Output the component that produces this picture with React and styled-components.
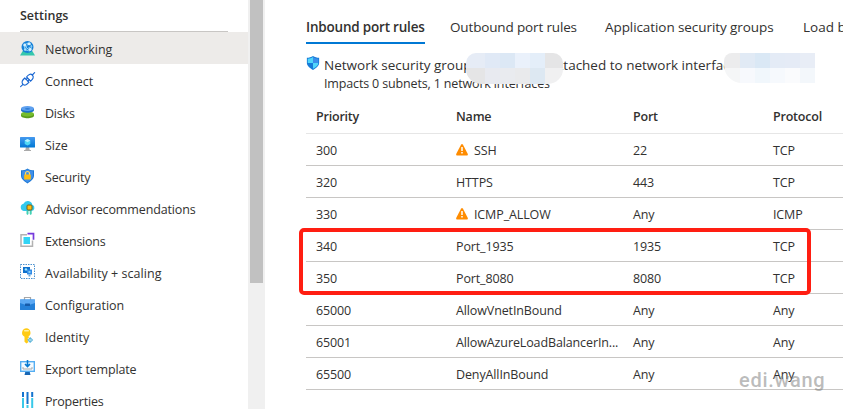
import React from 'react'
import styled, { createGlobalStyle, css } from 'styled-components'

const GlobalStyle = createGlobalStyle`
  * { box-sizing: border-box; }

  body {
    margin: 0;
    overflow: hidden;
    background: #fff;
    color: #323130;
    font-family: 'Open Sans', 'Noto Sans', sans-serif;
    font-size: 12.5px;
  }
`

const Page = styled.div`
  display: flex;
  width: 843px;
  height: 409px;
  overflow: hidden;
`

const Sidebar = styled.nav`
  flex: 0 0 248px;
  height: 100%;
  overflow: hidden;
`

const SidebarHeading = styled.div`
  height: 32px;
  margin: 0 20px;
  border-bottom: 1px solid #c8c6c4;
  font-weight: 600;
  line-height: 32px;
`

const NavItem = styled.div`
  display: flex;
  align-items: center;
  gap: 9px;
  height: 32px;
  padding: 0 20px;
  background: ${props => props.$active ? '#edebe9' : 'transparent'};

  svg {
    flex: none;
  }
`

const Label = styled.span`
  padding-top: 4px;
  line-height: 32px;
  white-space: nowrap;
  letter-spacing: ${props => props.$spacing || 0}px;
`

const ScrollTrack = styled.div`
  flex: 0 0 17px;
  height: 100%;
  padding: 0 2px;
  background: #f0f0f0;
`

const ScrollThumb = styled.div`
  height: 283px;
  background: #c1c1c1;
`

const Main = styled.main`
  position: relative;
  flex: 1;
  min-width: 0;
  padding: 12px 0 0 41px;
`

const Tabs = styled.div`
  display: flex;
  gap: 25px;
  height: 32px;
`

const Tab = styled.div`
  flex: none;
  width: ${props => props.$width}px;
  font-size: 13.5px;
  line-height: 31px;
  white-space: nowrap;
  letter-spacing: ${props => props.$spacing || 0}px;

  ${props => props.$active && css`
    border-bottom: 2px solid #0078d4;
    font-weight: 600;
  `}
`

const Info = styled.div`
  position: relative;
  display: flex;
  gap: 4px;
  height: 57px;
  padding-top: 11px;
  white-space: nowrap;

  > svg {
    margin-top: 1px;
  }
`

const InfoLine = styled.div`
  display: flex;
  height: 19px;
  font-size: 13.5px;
  line-height: 21px;
`

const GroupName = styled.span`
  flex: 0 0 227px;
`

const Impact = styled.div`
  line-height: 20px;
  letter-spacing: -0.15px;
`

const Mosaic = styled.div`
  position: absolute;
  top: 9px;
  left: ${props => props.$left}px;
  display: grid;
  grid-template-columns: ${props => props.$columns};
  grid-template-rows: 15px ${props => props.$lower}px;
  overflow: hidden;
  border-radius: ${props => props.$radius};
`

const MosaicCell = styled.i`
  background: ${props => props.$color};
`

const Cell = styled.div`
  display: flex;
  align-items: center;
  gap: 6px;
  white-space: nowrap;
`

const Row = styled.div`
  display: grid;
  grid-template-columns: 140px 177px 140px 1fr;
  height: 32px;
  padding: 1px 0 0 10px;
  border-bottom: 1px solid #c8c6c4;
  letter-spacing: -0.12px;

  ${props => props.$header && css`
    height: 33px;
    padding: 0 0 1px 10px;
    border-bottom-color: #e6e6e6;
    font-weight: 600;
    letter-spacing: -0.2px;
  `}
`

const Highlight = styled.div`
  position: absolute;
  top: 228px;
  left: 34px;
  width: 512px;
  height: 67px;
  border: 4px solid #ff1e12;
  border-radius: 5px;
`

const Watermark = styled.div`
  position: absolute;
  top: 368px;
  left: 474px;
  color: rgba(130, 130, 130, 0.55);
  font: 500 20px/24px Roboto, sans-serif;
  letter-spacing: 0.7px;
`

const Icon = ({ size = 16, children }) => (
  <svg width={size} height={size} viewBox='0 0 16 16' fill='none'>{children}</svg>
)

const NetworkIcon = () => (
  <Icon>
    <path d='M3 10.500h9l3 5H0z' fill='#35c7ad' />
    <circle cx='7.5' cy='7' r='6' fill='#1580d8' />
    <path d='M4 5l4-2 4 3-2 5-5-1z M4 5l6 6M8 3l-3 7M5 10l7-4' stroke='#9bd8fa' strokeWidth='.8' />
    <circle cx='4.7' cy='5' r='1.4' fill='#d8f3ff' />
    <circle cx='9.2' cy='3.7' r='1.5' fill='#d8f3ff' />
    <circle cx='10.2' cy='9.5' r='1.4' fill='#d8f3ff' />
    <circle cx='5' cy='9.7' r='1.1' fill='#a6e4ff' />
  </Icon>
)

const ConnectIcon = () => (
  <Icon>
    <g stroke='#1765d1' strokeWidth='1.1' strokeLinecap='round'>
      <path d='M.6 14.600L3 12.300M12.300 3L14.600.7' />
      <path d='M3 12.300c-2-2-.7-4 1.800-6.300l4.200 4.200c-2 2.500-4 3.900-6 2.100z' />
      <path d='M12.300 3c2 2 .7 4-1.600 6.200L6.500 5C8.500 2.500 10.500 1.200 12.300 3z' />
      <path d='M6.200 7.500l1.300-1.300M7.800 9.100l1.400-1.400' />
    </g>
  </Icon>
)

const DisksIcon = () => (
  <Icon>
    <path d='M1 10v1.500c0 3.600 13 3.600 13 0V10z' fill='#5a9c1c' />
    <ellipse cx='7.500' cy='10' rx='6.500' ry='2.600' fill='#76bc2d' />
    <path d='M1 4.500V6c0 3.600 13 3.600 13 0V4.500z' fill='#1b70c9' />
    <ellipse cx='7.500' cy='4.500' rx='6.500' ry='2.600' fill='#5ea0ef' />
    <ellipse cx='7.500' cy='4.800' rx='2.500' ry='.9' fill='#2d7cd5' />
  </Icon>
)

const SizeIcon = () => (
  <Icon>
    <defs>
      <linearGradient id='screen' x2='0' y2='1'>
        <stop stopColor='#4599ef' />
        <stop offset='1' stopColor='#0078d4' />
      </linearGradient>
    </defs>
    <path d='M6 11h3l.7 3H11v1H4v-1h1.300z' fill='#aaa' />
    <rect y='1' width='15' height='10.500' rx='.5' fill='url(#screen)' />
    <path d='M7.500 3l2.800 1.500v3.500l-2.800 1.600-2.800-1.600V4.500z' fill='#50d8f5' />
    <path d='M7.500 3l2.800 1.500-2.800 1.700-2.800-1.700z' fill='#b3f0ff' />
  </Icon>
)

const SecurityIcon = () => (
  <Icon>
    <path d='M7.500 .5C9.500 2 11.500 2.200 14 2.200v5.300c0 4-4 6.200-6.500 8-2.500-1.800-6.500-4-6.500-8V2.200c2.500 0 4.500-.2 6.500-1.700z' fill='#1c79d6' />
    <path d='M7.500 1.600C9.300 2.800 11 3.100 13 3.200v4.300c0 3.200-3 5.100-5.500 6.800C5 12.600 2 10.700 2 7.500V3.200c2-.1 3.700-.4 5.500-1.600z' fill='#418fe8' />
    <path d='M5.500 7V5.500a2 2 0 014 0V7' stroke='#ffdc65' strokeWidth='1.200' />
    <rect x='4.200' y='6.500' width='6.600' height='5' rx='.6' fill='#ffbe13' />
  </Icon>
)

const AdvisorIcon = () => (
  <Icon>
    <path d='M3.700 11a3.700 3.700 0 01-.2-7.200 4.600 4.600 0 018.800 1A3.200 3.200 0 0111.500 11z' fill='#32c9ed' />
    <path d='M6.500 10.500h2v3.500l-1 1-1-1zM9.700 10.500h2v3.500l-1 1-1-1z' fill='#43d2b5' />
    <rect x='7' y='5' width='5' height='5' rx='1' fill='#ffbd10' stroke='#71611d' />
  </Icon>
)

const ExtensionsIcon = () => (
  <Icon>
    <path d='M7 2.700H1v11.500h11.500V8.500' stroke='#b2b2b2' strokeWidth='1.500' />
    <path d='M7.500 1.700h6v6' stroke='#773adc' strokeWidth='1.700' />
    <rect x='3.500' y='5' width='6.500' height='7' fill='#32d4f5' />
  </Icon>
)

const ScalingIcon = () => (
  <Icon>
    <rect x='.5' y='.5' width='14' height='14' stroke='#4b91cf' strokeDasharray='1.500 1' />
    <path d='M3 3h7v6H3z' fill='#0f70cc' />
    <path d='M7 5.500h5v5H7z' fill='#328be6' />
    <path d='M8.500 10.500h2v2h-2z' fill='#66a8dd' />
    <path d='M4.500 5L6 4l1.200 1v1.500H5zM8.500 7.200h2v1.500h-2z' fill='#9be7ff' />
  </Icon>
)

const ConfigurationIcon = () => (
  <Icon>
    <path d='M4.500 4V1.500h6V4' stroke='#a7a7a7' strokeWidth='1.200' />
    <rect y='3.500' width='15' height='10.500' rx='.6' fill='#2580d8' />
    <path d='M0 3.500h15V7L9 9H6L0 7z' fill='#5ca9f4' />
    <rect x='5' y='7.500' width='5' height='2.500' rx='.5' fill='#155aa9' />
  </Icon>
)

const IdentityIcon = () => (
  <Icon>
    <path d='M6.500.3a4.500 4.500 0 00-2 8.500v5l2 1.800L8.500 14l-1-1.200 1-1-1-1L9 9.500l-.5-1A4.500 4.500 0 006.500.3z' fill='#ffcb16' />
    <rect x='4' y='2' width='5' height='1.400' rx='.7' fill='#fff0a5' />
    <path d='M10.200 9l3 3-3 3-3-3z' fill='#63b6d9' />
    <path d='M8.700 12h3' stroke='#d1f0fa' />
  </Icon>
)

const ExportIcon = () => (
  <Icon>
    <path d='M5.500 11h4l1 4h-6z' fill='#1766b4' />
    <rect x='.7' y='1.700' width='13.600' height='9.600' fill='#f5fbff' stroke='#55aef2' strokeWidth='1.400' />
    <path d='M7.500 0v6M5 4l2.500 2.500L10 4' stroke='#087ad0' strokeWidth='1.600' />
    <path d='M3 7v2h9V7' stroke='#aaa' />
  </Icon>
)

const PropertiesIcon = () => (
  <Icon>
    <path d='M3 0v5M12.200 0v5M7.500 0v12' stroke='#1474cf' strokeWidth='2' />
    <path d='M3 6v10M12.200 6v10M7.500 13v3' stroke='#39c9e9' strokeWidth='2' />
  </Icon>
)

const NsgIcon = () => (
  <Icon size={14}>
    <path d='M8 0c2 1.500 4.500 2 7 2v6c0 4-4.500 6.300-7 8-2.500-1.700-7-4-7-8V2c2.500 0 5-.5 7-2z' fill='#167bd8' />
    <path d='M8 1.200V8H2V3c2.300 0 4.200-.5 6-1.800zM8 8h6c0 3.500-3.500 5-6 6.700z' fill='#50d6fa' />
    <path d='M8 1.200V8h6V3c-2.300 0-4.200-.5-6-1.800z' fill='#3a8eea' />
  </Icon>
)

const WarningIcon = () => (
  <svg width='12' height='12' viewBox='0 0 12 12'>
    <path d='M5 .8Q6-.6 7 .8l4.700 9Q12.300 11.500 11 11.500H1Q-.3 11.500.3 9.800z' fill='#ff8c00' />
    <path d='M6 3v4M6 8v1.500' stroke='#fff' strokeWidth='1.500' />
  </svg>
)

const navItems = [
  { label: 'Networking', icon: NetworkIcon, active: true },
  { label: 'Connect', icon: ConnectIcon },
  { label: 'Disks', icon: DisksIcon, spacing: -0.2 },
  { label: 'Size', icon: SizeIcon },
  { label: 'Security', icon: SecurityIcon, spacing: -0.15 },
  { label: 'Advisor recommendations', icon: AdvisorIcon, spacing: -0.13 },
  { label: 'Extensions', icon: ExtensionsIcon, spacing: -0.25 },
  { label: 'Availability + scaling', icon: ScalingIcon, spacing: 0.05 },
  { label: 'Configuration', icon: ConfigurationIcon, spacing: -0.05 },
  { label: 'Identity', icon: IdentityIcon },
  { label: 'Export template', icon: ExportIcon, spacing: -0.15 },
  { label: 'Properties', icon: PropertiesIcon, spacing: -0.2 }
]

const rules = [
  { priority: '300', name: 'SSH', port: '22', protocol: 'TCP', warning: true },
  { priority: '320', name: 'HTTPS', port: '443', protocol: 'TCP' },
  { priority: '330', name: 'ICMP_ALLOW', port: 'Any', protocol: 'ICMP', warning: true },
  { priority: '340', name: 'Port_1935', port: '1935', protocol: 'TCP' },
  { priority: '350', name: 'Port_8080', port: '8080', protocol: 'TCP' },
  { priority: '65000', name: 'AllowVnetInBound', port: 'Any', protocol: 'Any' },
  { priority: '65001', name: 'AllowAzureLoadBalancerIn...', port: 'Any', protocol: 'Any' },
  { priority: '65500', name: 'DenyAllInBound', port: 'Any', protocol: 'Any' }
]

const groupMask = ['#e6ecf6', '#e0e9f6', '#dce8f5', '#eaf1fb', '#e4eef9', '#e5e5e6', '#e5e5e6', '#e8eaf0', '#e9ebef', '#e9eaec', '#dde8f2', '#f0f0f1']
const interfaceMask = ['#ececed', '#e1eaf5', '#dae8f5', '#e4ebf6', '#e5ebf6', '#e8edf6', '#f5f6f7', '#f7f9fd', '#f1f7fc', '#f6f9fd', '#fafbfd', '#f3f7fb']

export default function App () {
  return (
    <>
      <GlobalStyle />
      <Page>
        <Sidebar>
          <SidebarHeading>Settings</SidebarHeading>
          {navItems.map(({ label, icon: ItemIcon, active, spacing }) => (
            <NavItem key={label} $active={active}>
              <ItemIcon />
              <Label $spacing={spacing}>{label}</Label>
            </NavItem>
          ))}
        </Sidebar>
        <ScrollTrack><ScrollThumb /></ScrollTrack>
        <Main>
          <Tabs>
            <Tab $active $width={119} $spacing={-0.2}>Inbound port rules</Tab>
            <Tab $width={130} $spacing={-0.15}>Outbound port rules</Tab>
            <Tab $width={173} $spacing={-0.08}>Application security groups</Tab>
            <Tab $width={100}>Load balancing</Tab>
          </Tabs>
          <Info>
            <NsgIcon />
            <div>
              <InfoLine>
                <GroupName>Network security group</GroupName>
                <span>attached to network interface</span>
              </InfoLine>
              <Impact>Impacts 0 subnets, 1 network interfaces</Impact>
            </div>
            <Mosaic $left={160} $columns='19px repeat(4, 15px) 18px' $lower={16} $radius='10px 10px 15px 15px'>
              {groupMask.map((color, i) => <MosaicCell key={i} $color={color} />)}
            </Mosaic>
            <Mosaic $left={418} $columns='16px repeat(5, 15px)' $lower={15} $radius='8px 0 0 18px'>
              {interfaceMask.map((color, i) => <MosaicCell key={i} $color={color} />)}
            </Mosaic>
          </Info>
          <Row $header>
            <Cell>Priority</Cell>
            <Cell>Name</Cell>
            <Cell>Port</Cell>
            <Cell>Protocol</Cell>
          </Row>
          {rules.map(rule => (
            <Row key={rule.priority}>
              <Cell>{rule.priority}</Cell>
              <Cell>
                {rule.warning && <WarningIcon />}
                {rule.name}
              </Cell>
              <Cell>{rule.port}</Cell>
              <Cell>{rule.protocol}</Cell>
            </Row>
          ))}
          <Highlight />
          <Watermark>edi.wang</Watermark>
        </Main>
      </Page>
    </>
  )
}
